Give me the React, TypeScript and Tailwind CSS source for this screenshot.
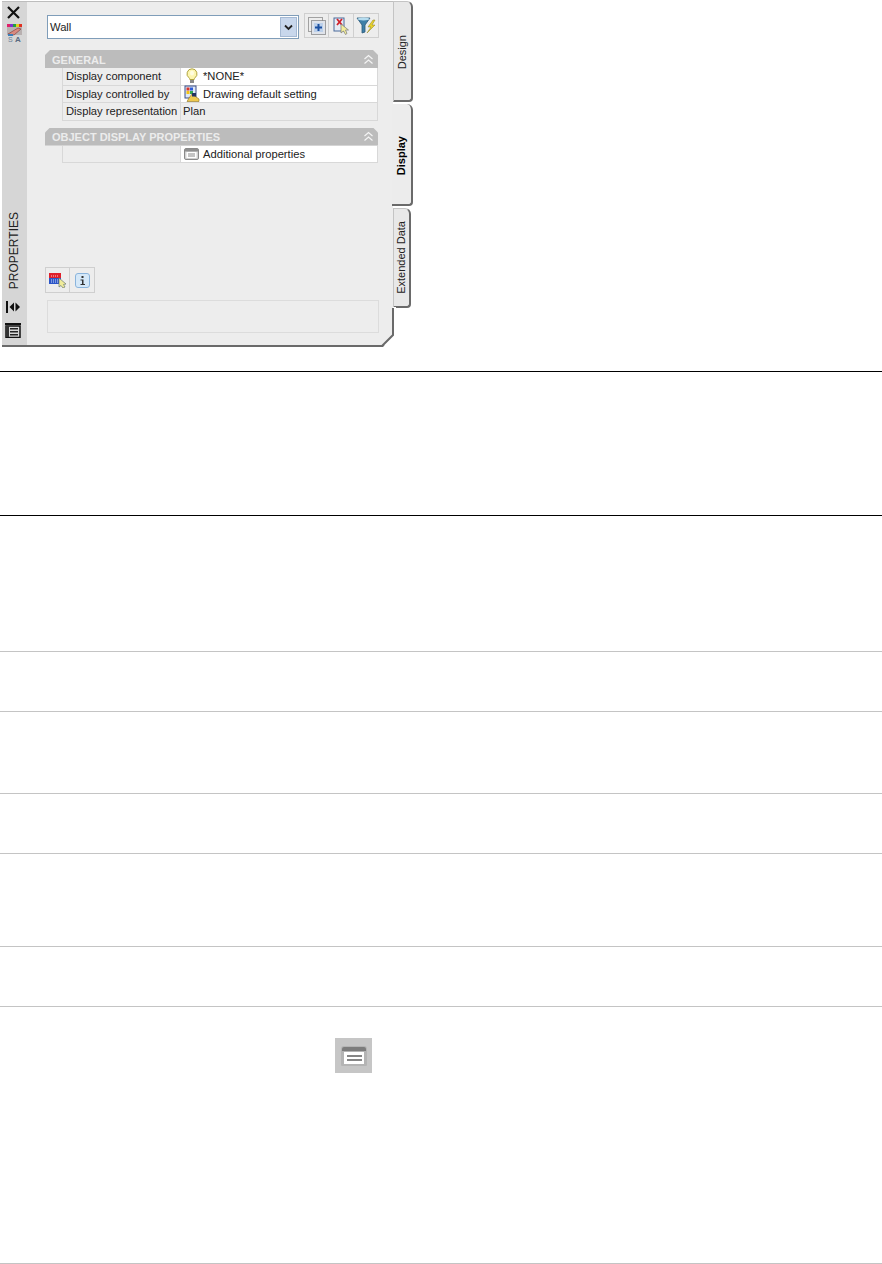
import React from "react";

const F = { fontFamily: '"Liberation Sans", Arial, sans-serif' };

function Chevrons() {
  return (
    <svg width="11" height="11" viewBox="0 0 11 11" fill="none" stroke="#f4f4f4" strokeWidth="1.200">
      <path d="M1.500 5 L5.500 1.500 L9.500 5" />
      <path d="M1.500 9.500 L5.500 6 L9.500 9.500" />
    </svg>
  );
}

function Bulb() {
  return (
    <svg width="12" height="16" viewBox="0 0 12 16">
      <path d="M6 .8a5 5 0 0 1 3 9c-.6.5-.8 1.100-.8 1.700H3.800c0-.6-.2-1.200-.8-1.700a5 5 0 0 1 3-9z" fill="#fdf6b0" stroke="#b0a440" />
      <ellipse cx="6" cy="5" rx="2" ry="2.500" fill="#fffde0" />
      <rect x="4" y="12" width="4" height="3" fill="#8a8a8a" />
    </svg>
  );
}

function Controlled() {
  return (
    <svg width="16" height="17" viewBox="0 0 16 17">
      <rect x="1" y="1" width="11" height="12" fill="#dfe8f5" stroke="#3a4f8a" />
      <rect x="2.500" y="2.500" width="3" height="3" fill="#d9342b" />
      <rect x="6" y="2.500" width="3" height="3" fill="#2b5bd9" />
      <rect x="2.500" y="6" width="3" height="3" fill="#f2c316" />
      <rect x="6" y="6" width="3" height="3" fill="#33a852" />
      <path d="M8 9 L15 14 L15 16.500 L3 16.500 L5 13 Z" fill="#eec94f" stroke="#8a6f1c" strokeWidth=".6" />
      <rect x="8" y="8" width="4" height="3.500" fill="#23325f" />
    </svg>
  );
}

function Properties() {
  return (
    <svg width="15" height="12" viewBox="0 0 15 12">
      <rect x=".5" y=".5" width="14" height="11" rx="1.500" fill="#d2d2d2" stroke="#8a8a8a" />
      <rect x="1" y="1" width="13" height="2.500" fill="#8f8f8f" />
      <rect x="2.500" y="4" width="10" height="6" fill="#ffffff" />
      <rect x="4" y="5.500" width="7" height="1" fill="#8a8a8a" />
      <rect x="4" y="7.500" width="7" height="1" fill="#8a8a8a" />
    </svg>
  );
}

function Row({ label, children, shaded }: { label?: string; children: React.ReactNode; shaded?: boolean }) {
  return (
    <div className="flex h-[17.5px] ml-[17px] border-b border-[#d8d8d8]">
      <div className="w-[119px] pl-[3px] text-[11.2px] leading-[16px] text-[#222] border-l border-r border-[#d8d8d8] whitespace-nowrap">
        {label}
      </div>
      <div className={`flex-1 flex items-center text-[11.2px] leading-[16px] text-[#222] border-r border-[#d8d8d8] ${shaded ? "" : "bg-white"}`}>
        {children}
      </div>
    </div>
  );
}

function Section({ title, children }: { title: string; children: React.ReactNode }) {
  return (
    <div className="w-[333px] ml-[18px]">
      <div className="h-[18px] flex items-center justify-between pl-[7px] pr-[4px] bg-[#bcbcbc] [clip-path:polygon(5px_0,328px_0,333px_5px,333px_100%,0_100%,0_5px)]">
        <span className="pt-[2px] text-[11px] font-bold tracking-[0px] text-[#ececec] whitespace-nowrap">{title}</span>
        <Chevrons />
      </div>
      {children}
    </div>
  );
}

function ToolButton({ children, w = "w-[24px]" }: { children: React.ReactNode; w?: string }) {
  return (
    <div className={`${w} h-full flex items-center justify-center border-r border-[#cfcfcf] last:border-r-0`}>
      {children}
    </div>
  );
}

function Tab({ label, active, h, w, mt, pb }: { label: string; active?: boolean; h: string; w: string; mt: string; pb: string }) {
  return (
    <div
      className={`${h} ${w} ${mt} flex flex-col items-center justify-end ${pb} rounded-tr-[6px] rounded-br-[4px] border-r-2 border-b-2 border-[#6a6a6a] ${
        active ? "bg-[#ececec] -ml-px" : "bg-[#e8e8e8] border-l border-l-[#c4c4c4] border-t border-t-[#c4c4c4]"
      }`}
    >
      <span
        className={`[writing-mode:vertical-rl] rotate-180 text-[11px] whitespace-nowrap ${
          active ? "font-bold text-black" : "text-[#222]"
        }`}
      >
        {label}
      </span>
    </div>
  );
}

function Panel() {
  return (
    <div className="relative w-[414px] h-[348px] flex pl-[2px] pt-[1px]">
      <div className="w-[25px] h-[346px] bg-[#d6d6d6] border-t border-[#bdbdbd] border-b-2 border-b-[#6a6a6a] flex flex-col items-center">
        <svg className="mt-[4px] -ml-[2px]" width="13" height="13" viewBox="0 0 13 13" stroke="#111" strokeWidth="2.200">
          <path d="M1 1 L12 12 M12 1 L1 12" />
        </svg>
        <svg className="mt-[5px]" width="17" height="18" viewBox="0 0 17 18">
          <rect x="1" y="0" width="3" height="3" fill="#e0206a" />
          <rect x="4" y="0" width="3" height="3" fill="#8030d0" />
          <rect x="7" y="0" width="3" height="3" fill="#20a040" />
          <rect x="10" y="0" width="3" height="3" fill="#e0d020" />
          <rect x="13" y="0" width="3" height="3" fill="#e03020" />
          <rect x="1" y="3" width="15" height="8" fill="#b8b0b0" />
          <path d="M2 10 L12 4 L15 5 L8 11 Z" fill="#d88a80" stroke="#803030" strokeWidth=".6" />
          <rect x="2" y="10" width="5" height="2" fill="#3d7fb8" />
          <text x="2" y="17.500" fontSize="7" fill="#6a8098" fontFamily="Liberation Sans">S</text>
          <text x="9" y="17.500" fontSize="8" fontWeight="700" fill="#5a6a80" fontFamily="Liberation Sans">A</text>
        </svg>
        <span className="[writing-mode:vertical-rl] rotate-180 mt-auto text-[12px] leading-[15px] text-[#222] whitespace-nowrap">
          PROPERTIES
        </span>
        <svg className="mt-[12px] -ml-[3px]" width="15" height="12" viewBox="0 0 15 12" fill="#111">
          <rect x="0" y="0" width="2" height="12" />
          <path d="M8 1.500 L3.500 6 L8 10.500 Z" />
          <path d="M9.500 1.500 L14 6 L9.500 10.500 Z" />
        </svg>
        <svg className="mt-[10px] mb-[7px] -ml-[3px]" width="16" height="15" viewBox="0 0 16 15">
          <rect x="0" y="0" width="16" height="2" fill="#111" />
          <rect x="1" y="3" width="14" height="11.500" fill="#d8d8d8" stroke="#111" strokeWidth="1.500" />
          <rect x="5" y="5" width="8" height="1.500" fill="#222" />
          <rect x="5" y="8" width="8" height="1.500" fill="#222" />
          <rect x="5" y="11" width="8" height="1.500" fill="#222" />
          <rect x="1" y="3" width="3" height="11" fill="#333" />
        </svg>
      </div>

      <div className="w-[366px] h-[346px] bg-[#ededed] border-t border-[#bdbdbd] border-b-2 border-b-[#6a6a6a] flex flex-col">
        <div className="flex items-start pl-[20px] pt-[11px]">
          <div className="w-[252px] h-[24px] mt-[2px] flex items-center justify-between bg-white border border-[#7f9db9] pl-[2px] pr-[1px]">
            <span className="text-[11.2px] text-[#222]">Wall</span>
            <div className="w-[17px] h-[20px] flex items-center justify-center bg-[#c8d7ec] border border-[#a5b9d3]">
              <svg width="9" height="7" viewBox="0 0 9 7" fill="none" stroke="#222" strokeWidth="1.800">
                <path d="M1 1.500 L4.500 5 L8 1.500" />
              </svg>
            </div>
          </div>
          <div className="ml-[5px] flex h-[25px] w-[75px] border border-[#cfcfcf]">
            <ToolButton w="w-[25px]">
              <svg width="18" height="18" viewBox="0 0 18 18">
                <rect x=".5" y=".5" width="14" height="14" fill="none" stroke="#555" strokeDasharray="1 1" />
                <rect x="3.500" y="3.500" width="14" height="14" fill="#dfe3ea" stroke="#555" strokeDasharray="1 1" />
                <rect x="6" y="6" width="9" height="9" fill="#bcd0ea" />
                <path d="M10.500 7v7M7 10.500h7" stroke="#1a4fa0" strokeWidth="2" />
              </svg>
            </ToolButton>
            <ToolButton w="w-[25px]">
              <svg width="17" height="18" viewBox="0 0 17 18">
                <rect x="1" y="1" width="10" height="13" fill="#e6ebf5" stroke="#4a6a9a" />
                <path d="M4 2 L9 8 M9 2 L4 8" stroke="#d0202a" strokeWidth="1.800" />
                <path d="M8 7 L8 16 L10.500 14 L12.500 17.500 L14 16.500 L12.500 13 L15.500 13 Z" fill="#f3ee9a" stroke="#777" strokeWidth=".7" />
              </svg>
            </ToolButton>
            <ToolButton w="w-[25px]">
              <svg width="20" height="17" viewBox="0 0 20 17">
                <path d="M1 1 H14 L9 8 V15 L6 16 V8 Z" fill="#3f7fa8" stroke="#2c5a7a" strokeWidth=".8" />
                <ellipse cx="7.500" cy="2" rx="6" ry="1.500" fill="#b5dcef" />
                <path d="M17 3 L12 10 H15 L11 16 L19 8 H16 L19 3 Z" fill="#e8d22c" stroke="#8c7f1c" strokeWidth=".5" />
              </svg>
            </ToolButton>
          </div>
        </div>

        <div className="mt-[11px]">
          <Section title="GENERAL">
            <Row label="Display component">
              <span className="w-[21px] flex justify-center"><Bulb /></span>
              <span className="ml-[1px]">*NONE*</span>
            </Row>
            <Row label="Display controlled by">
              <span className="w-[21px] flex justify-center"><Controlled /></span>
              <span className="ml-[1px]">Drawing default setting</span>
            </Row>
            <Row label="Display representation" shaded>
              <span className="ml-[2px] -mt-[1px]">Plan</span>
            </Row>
          </Section>
        </div>
        <div className="mt-[7px]">
          <Section title="OBJECT DISPLAY PROPERTIES">
            <Row>
              <span className="w-[21px] flex justify-center"><Properties /></span>
              <span className="ml-[1px]">Additional properties</span>
            </Row>
          </Section>
        </div>

        <div className="mt-auto ml-[18px] flex h-[26px] w-[50px] border border-[#cfcfcf]">
          <ToolButton>
            <svg width="18" height="15" viewBox="0 0 18 15">
              <rect x="0" y="0" width="12" height="5" fill="#e0202a" />
              <rect x="0" y="5" width="12" height="6" fill="#2b55c8" />
              <path d="M2 3h8M2 7h8M2 9h8" stroke="#ffffff" strokeWidth=".8" strokeDasharray="1 1" />
              <path d="M10 5 L10 14 L12 12.500 L14 15 L16 14 L14.500 11.500 L17 11 Z" fill="#f0eb9a" stroke="#6c7a70" strokeWidth=".7" />
            </svg>
          </ToolButton>
          <ToolButton>
            <svg width="15" height="15" viewBox="0 0 15 15">
              <rect x=".5" y=".5" width="14" height="14" rx="2.500" fill="#d5e8f8" stroke="#8ab4dc" />
              <rect x="6.500" y="3" width="2" height="2" fill="#333" />
              <path d="M5.500 6.500H8.500V11H10V12H5.500V11H7V7.500H5.500Z" fill="#333" />
            </svg>
          </ToolButton>
        </div>
        <div className="ml-[20px] mt-[7px] mb-[12px] w-[332px] h-[33px] border border-[#dcdcdc]" />
      </div>

      <div className="flex flex-col w-[21px]">
        <Tab label="Design" h="h-[101px]" w="w-[20px]" mt="mt-0" pb="pb-[31px]" />
        <Tab label="Display" active h="h-[102px]" w="w-[21px]" mt="mt-[2px]" pb="pb-[29px]" />
        <Tab label="Extended Data" h="h-[100px]" w="w-[18px]" mt="mt-[2px]" pb="pb-[12px]" />
      </div>

      <svg className="absolute left-[378px] top-[307px]" width="18" height="41" viewBox="0 0 18 41">
        <path d="M15 0 V28 L5 40 H0 V46 H18 V0 Z" fill="#ffffff" />
        <path d="M15 1 V28 L4 39 H0" fill="none" stroke="#6a6a6a" strokeWidth="2" />
      </svg>
    </div>
  );
}

export default function App() {
  return (
    <div className="w-[882px] h-[1264px] bg-white overflow-hidden" style={F}>
      <Panel />
      <div className="mt-[23px] h-px bg-black" />
      <div className="mt-[143px] h-px bg-black" />
      <div className="mt-[135px] h-px bg-[#c4c4c4]" />
      <div className="mt-[59px] h-px bg-[#c4c4c4]" />
      <div className="mt-[81px] h-px bg-[#c4c4c4]" />
      <div className="mt-[59px] h-px bg-[#c4c4c4]" />
      <div className="mt-[92px] h-px bg-[#c4c4c4]" />
      <div className="mt-[59px] h-px bg-[#c4c4c4]" />
      <div className="mt-[31px] ml-[335px] w-[37px] h-[35px] bg-[#c6c6c6] flex items-center justify-center">
        <svg width="28" height="24" viewBox="0 0 28 24">
          <path d="M1 5 Q1 2 4 2 H24 Q27 2 27 5 V21 Q27 22 26 22 H2 Q1 22 1 21 Z" fill="#b4b4b4" />
          <path d="M2 5 Q2 3 4 3 H24 Q26 3 26 5 V7 H2 Z" fill="#7c7c7c" />
          <rect x="4" y="8" width="20" height="12" fill="#ffffff" />
          <rect x="7" y="11" width="15" height="2" fill="#858585" />
          <rect x="7" y="15" width="15" height="2" fill="#858585" />
        </svg>
      </div>
      <div className="mt-[190px] h-px bg-[#c4c4c4]" />
    </div>
  );
}
